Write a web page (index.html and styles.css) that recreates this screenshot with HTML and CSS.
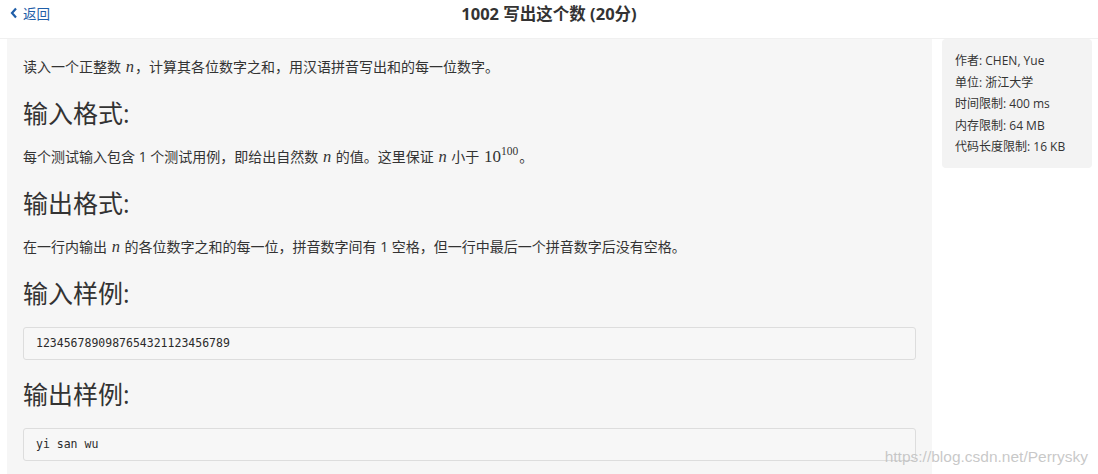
FILE: index.html
```html
<!DOCTYPE html>
<html lang="zh-CN">

<head>
    <meta charset="UTF-8">
    <meta name="viewport" content="width=device-width, initial-scale=1.0">
    <title>1002 写出这个数</title>
    <link rel="stylesheet" href="styles.css">
</head>

<body>
    <div class="header">
        <a class="back" href="#">
            <svg class="back-icon" width="8" height="12" viewBox="0 0 8 12">
                <path d="M6 1.5 L2 6 L6 10.5" fill="none" stroke="currentColor" stroke-width="2.2" />
            </svg>
            返回
        </a>
        <h1 class="title">1002 写出这个数 (20分)</h1>
    </div>

    <div class="page">
        <div class="problem">
            <p>读入一个正整数 <span class="math">n</span>，计算其各位数字之和，用汉语拼音写出和的每一位数字。</p>

            <h2>输入格式:</h2>
            <p>每个测试输入包含 1 个测试用例，即给出自然数 <span class="math">n</span> 的值。这里保证 <span class="math">n</span> 小于 <span class="num">10<sup>100</sup></span>。</p>

            <h2>输出格式:</h2>
            <p>在一行内输出 <span class="math">n</span> 的各位数字之和的每一位，拼音数字间有 1 空格，但一行中最后一个拼音数字后没有空格。</p>

            <h2>输入样例:</h2>
            <pre class="sample">1234567890987654321123456789</pre>

            <h2>输出样例:</h2>
            <pre class="sample">yi san wu</pre>
        </div>

        <div class="info">
            <div class="info-row">作者: CHEN, Yue</div>
            <div class="info-row">单位: 浙江大学</div>
            <div class="info-row">时间限制: 400 ms</div>
            <div class="info-row">内存限制: 64 MB</div>
            <div class="info-row">代码长度限制: 16 KB</div>
        </div>
    </div>

    <div class="watermark">https://blog.csdn.net/Perrysky</div>
</body>

</html>
```

FILE: styles.css
```css
body {
    font-family: "Open Sans", "Noto Sans CJK SC", sans-serif;
    margin: 0;
    padding: 0;
    background-color: #ffffff;
    color: #333333;
    overflow: hidden;
}

.header {
    position: relative;
    height: 38px;
    border-bottom: 1px solid #f0f0f0;
    display: flex;
    align-items: center;
    justify-content: center;
}

.back {
    position: absolute;
    left: 10px;
    top: 3px;
    display: flex;
    align-items: center;
    gap: 5px;
    color: #1f5ea8;
    font-size: 13.5px;
    text-decoration: none;
}

.back-icon {
    display: block;
}

.title {
    margin: 0 0 12px;
    font-size: 16.5px;
    font-weight: bold;
    color: #333333;
}

.page {
    display: flex;
    align-items: flex-start;
    gap: 10px;
    padding: 0 6px 0 7px;
}

.problem {
    flex: 1;
    min-height: 460px;
    background: #f6f6f6;
    padding: 18px 16px 16px;
}

.problem p {
    margin: 0;
    font-size: 14px;
    line-height: 20px;
}

.problem h2 {
    margin: 19px 0 17px;
    font-size: 25px;
    line-height: 34px;
    font-weight: normal;
}

.problem .sample + h2 {
    margin-top: 17px;
}

.math {
    font-family: "Liberation Serif", "DejaVu Serif", serif;
    font-style: italic;
    font-size: 16.5px;
    margin: 0 1px;
}

.num {
    font-family: "Liberation Serif", "DejaVu Serif", serif;
    font-size: 17px;
    margin: 0 1px;
}

.num sup {
    font-size: 11.5px;
    line-height: 0;
}

.sample {
    margin: 0;
    padding: 8px 12px;
    background: #f7f7f7;
    border: 1px solid #dddddd;
    border-radius: 3px;
    font-family: "DejaVu Sans Mono", monospace;
    font-size: 11.5px;
    line-height: 15px;
    color: #2b2b2b;
}

.info {
    width: 150px;
    box-sizing: border-box;
    background: #f3f3f3;
    border-radius: 4px;
    padding: 11px 13px 10px;
    font-size: 12px;
}

.info-row {
    line-height: 21.5px;
}

.watermark {
    position: absolute;
    right: 10px;
    bottom: 8px;
    font-family: "Liberation Sans", Arial, sans-serif;
    font-size: 15.5px;
    color: rgba(190, 190, 190, 0.85);
}
```
